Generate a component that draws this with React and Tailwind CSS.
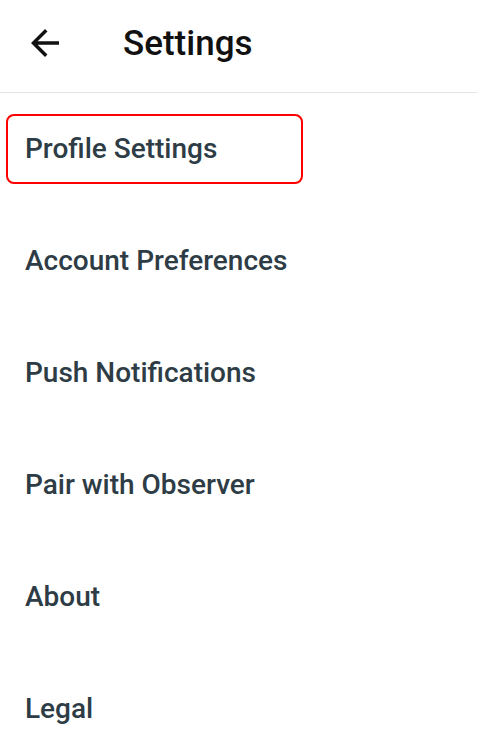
import React from 'react';

const items = [
  'Profile Settings',
  'Account Preferences',
  'Push Notifications',
  'Pair with Observer',
  'About',
  'Legal',
];

const BackArrow = () => (
  <svg viewBox="0 0 24 24" className="w-[42px] h-[42px]" fill="#111">
    <path d="M20 11H7.83l5.59-5.59L12 4l-8 8 8 8 1.41-1.41L7.83 13H20v-2z" />
  </svg>
);

export default function App() {
  return (
    <div className="w-[477px] h-[749px] bg-white overflow-hidden" style={{ fontFamily: 'Roboto, sans-serif' }}>
      <header className="h-[93px] flex items-center border-b border-[#e4e4e4]">
        <button className="ml-[24px] -mt-[6px]">
          <BackArrow />
        </button>
        <h1 className="ml-[57px] -mt-[6px] text-[35px] leading-none font-medium text-[#111]">Settings</h1>
      </header>
      <ul>
        {items.map((label, i) => (
          <li key={label} className="h-[112px] flex items-center">
            <div
              className={`ml-[6px] w-[297px] h-[70px] rounded-lg border-2 pl-[17px] flex items-center ${
                i === 0 ? 'border-[#ff0000]' : 'border-transparent'
              }`}
            >
              <span className="text-[28px] font-medium text-[#2e3c46]">{label}</span>
            </div>
          </li>
        ))}
      </ul>
    </div>
  );
}
